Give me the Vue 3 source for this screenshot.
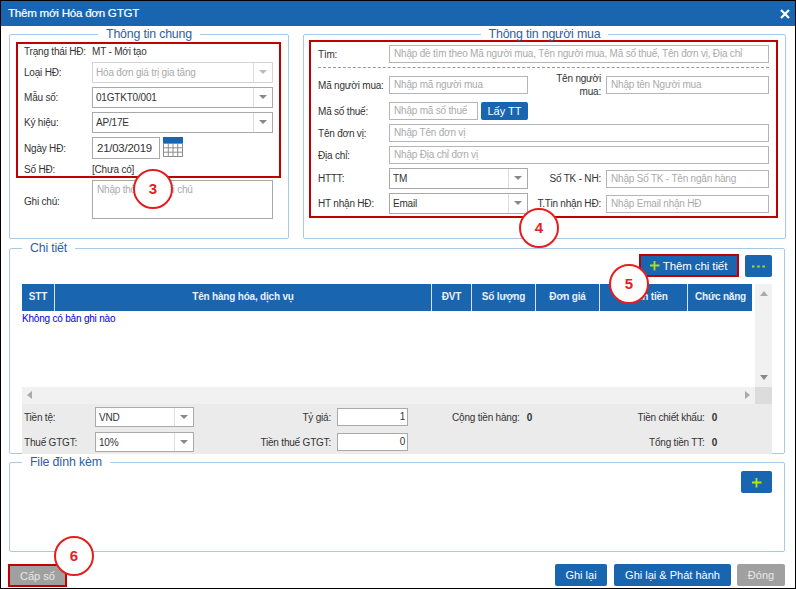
<script setup>
const columns = [
  { name: 'STT', width: 33 },
  { name: 'Tên hàng hóa, dịch vụ', width: 377 },
  { name: 'ĐVT', width: 40 },
  { name: 'Số lượng', width: 64 },
  { name: 'Đơn giá', width: 64 },
  { name: 'Thành tiền', width: 88 },
  { name: 'Chức năng', width: 65 }
]
</script>

<template>
  <div class="win">
    <header class="title">
      <span>Thêm mới Hóa đơn GTGT</span>
      <svg class="close" width="10" height="10" viewBox="0 0 10 10"><path d="M1 1l8 8M9 1l-8 8" stroke="#fff" stroke-width="2.2" fill="none" /></svg>
    </header>

    <div class="top">
      <fieldset class="fs fs-left">
        <legend class="center">Thông tin chung</legend>
        <div class="red red-left">
          <div class="row r14"><label>Trạng thái HĐ:</label><span class="val">MT - Mới tạo</span></div>
          <div class="row">
            <label>Loại HĐ:</label>
            <div class="sel disabled full"><span>Hóa đơn giá trị gia tăng</span><i></i></div>
          </div>
          <div class="row"><label>Mẫu số:</label><div class="sel full"><span>01GTKT0/001</span><i></i></div></div>
          <div class="row"><label>Ký hiệu:</label><div class="sel full"><span>AP/17E</span><i></i></div></div>
          <div class="row r22">
            <label>Ngày HĐ:</label>
            <div class="date">21/03/2019</div>
            <svg class="cal" width="20" height="20" viewBox="0 0 20 20">
              <rect x="0" y="0" width="20" height="6" fill="#1a65b0" />
              <path d="M.5 6v14M5.3 6v14M10 6v14M14.7 6v14M19.5 6v14M0 6.500h20M0 10.800h20M0 15.200h20M0 19.500h20" stroke="#8c8c8c" fill="none" />
            </svg>
          </div>
          <div class="row r13"><label>Số HĐ:</label><span class="val">[Chưa có]</span></div>
        </div>
        <div class="note">
          <label>Ghi chú:</label>
          <div class="textarea">Nhập thông tin ghi chú</div>
        </div>
      </fieldset>

      <fieldset class="fs fs-right">
        <legend class="center">Thông tin người mua</legend>
        <div class="red red-right">
          <div class="line"><label>Tìm:</label><div class="inp grow ph">Nhập đề tìm theo Mã người mua, Tên người mua, Mã số thuế, Tên đơn vị, Địa chỉ</div></div>
          <div class="dash"></div>
          <div class="line">
            <label>Mã người mua:</label><div class="inp w139 ph">Nhập mã người mua</div>
            <label class="l2">Tên người<br />mua:</label><div class="inp grow ph">Nhập tên Người mua</div>
          </div>
          <div class="line gap8">
            <label>Mã số thuế:</label><div class="inp w89 ph">Nhập mã số thuế</div><button class="btn lay">Lấy TT</button>
          </div>
          <div class="line gap4"><label>Tên đơn vị:</label><div class="inp grow ph">Nhập Tên đơn vị</div></div>
          <div class="line gap4"><label>Địa chỉ:</label><div class="inp grow ph">Nhập Địa chỉ đơn vị</div></div>
          <div class="line gap4 tall">
            <label>HTTT:</label><div class="sel w139"><span>TM</span><i></i></div>
            <label class="l2">Số TK - NH:</label><div class="inp grow ph">Nhập Số TK - Tên ngân hàng</div>
          </div>
          <div class="line gap4 tall">
            <label>HT nhận HĐ:</label><div class="sel w139"><span>Email</span><i></i></div>
            <label class="l2">T.Tin nhận HĐ:</label><div class="inp grow ph">Nhập Email nhận HĐ</div>
          </div>
        </div>
      </fieldset>
    </div>

    <fieldset class="fs fs-detail">
      <legend>Chi tiết</legend>
      <div class="toolbar">
        <button class="btn add">
          <svg width="11" height="11" viewBox="0 0 11 11"><path d="M5.500 1v9.500M1 5.500h9.500" stroke="#a8e01e" stroke-width="1.800" fill="none" /></svg>
          Thêm chi tiết
        </button>
        <button class="btn more">
          <svg width="13" height="3" viewBox="0 0 13 3"><path d="M0 1.500h2.500M5.200 1.500h2.500M10.400 1.500h2.500" stroke="#a8e01e" stroke-width="2" fill="none" /></svg>
        </button>
      </div>
      <div class="grid">
        <div class="grid-main">
          <div class="thead">
            <div v-for="c in columns" :key="c.name" class="th" :style="{ width: c.width + 'px' }">{{ c.name }}</div>
          </div>
          <div class="empty">Không có bản ghi nào</div>
        </div>
        <div class="vbar"><b class="up"></b><b class="down"></b></div>
        <div class="hbar"><b class="left"></b><b class="right"></b></div>
        <div class="corner"></div>
      </div>
      <div class="summary">
        <div class="sum-row">
          <label class="s1">Tiền tệ:</label>
          <div class="sel w99"><span>VND</span><i></i></div>
          <label class="s2">Tỷ giá:</label>
          <div class="num">1</div>
          <div class="s3">Cộng tiền hàng:<em>0</em></div>
          <div class="s4">Tiền chiết khấu:<em>0</em></div>
        </div>
        <div class="sum-row">
          <label class="s1">Thuế GTGT:</label>
          <div class="sel w99"><span>10%</span><i></i></div>
          <label class="s2">Tiền thuế GTGT:</label>
          <div class="num">0</div>
          <div class="s3"></div>
          <div class="s4">Tổng tiền TT:<em>0</em></div>
        </div>
      </div>
    </fieldset>

    <fieldset class="fs fs-file">
      <legend>File đính kèm</legend>
      <div class="file-tools">
        <button class="btn plus">
          <svg width="11" height="11" viewBox="0 0 11 11"><path d="M5.500 1v9.500M1 5.500h9.500" stroke="#b4ec00" stroke-width="1.800" fill="none" /></svg>
        </button>
      </div>
    </fieldset>

    <footer class="foot">
      <button class="btn grey capso">Cấp số</button>
      <button class="btn ghi">Ghi lại</button>
      <button class="btn phat">Ghi lại &amp; Phát hành</button>
      <button class="btn grey dong">Đóng</button>
    </footer>

    <span class="mark m3">3</span>
    <span class="mark m4">4</span>
    <span class="mark m5">5</span>
    <span class="mark m6">6</span>
  </div>
</template>

<style>
html, body { margin: 0; background: #000; }
</style>

<style scoped>
.win {
  position: relative;
  box-sizing: border-box;
  width: 796px;
  height: 589px;
  padding-top: 1px;
  border-left: 1px solid #000;
  border-right: 1px solid #000;
  border-bottom: 1px solid #000;
  background: #fff;
  box-shadow: inset 0 1px 0 #000;
  font-family: "Liberation Sans", Arial, sans-serif;
  font-size: 10px;
  letter-spacing: -0.2px;
  color: #333;
  overflow: hidden;
}
.title {
  height: 25px;
  background: #1a65b0;
  color: #fff;
  font-size: 11.600px;
  letter-spacing: -0.25px;
  display: flex;
  align-items: center;
  justify-content: space-between;
  padding: 0 5px 3px 7px;
  box-sizing: border-box;
  -webkit-text-stroke: .2px #fff;
}
.close { margin-top: 3px; }
.top {
  display: flex;
  gap: 14px;
  margin: 2px 0 0 8px;
}
.fs {
  box-sizing: border-box;
  min-inline-size: 0;
  margin: 0;
  padding: 0;
  border: 1px solid #a9c8e6;
  border-radius: 2px;
}
legend {
  height: 12px;
  line-height: 12px;
  padding: 0 8px;
  margin-left: 0;
  font-size: 12.400px;
  letter-spacing: -0.2px;
  color: #2f5f9f;
  white-space: nowrap;
}
legend.center { margin-left: auto; margin-right: auto; }
.fs-left { width: 280px; height: 211px; }
.fs-right { width: 483px; height: 211px; }
.fs-detail { width: 776px; height: 212px; margin: 3px 0 0 8px; padding: 0 12px; }
.fs-file { width: 776px; height: 96px; margin: 2px 0 0 8px; padding: 3px 12px 0; }

.red { box-sizing: border-box; border: 2px solid #c00000; }
.red-left {
  width: 265px;
  height: 136px;
  margin: 2px 0 0 6px;
  padding: 0 6px;
  display: flex;
  flex-direction: column;
  gap: 4px;
}
.row { display: flex; align-items: center; height: 21px; }
.row label { width: 68px; flex: none; }
.r14 { height: 14px; }
.r13 { height: 13px; }
.r22 { height: 22px; }
.val { color: #333; }
.sel {
  box-sizing: border-box;
  height: 21px;
  display: flex;
  align-items: center;
  border: 1px solid #a9a9a9;
  background: #fff;
  position: relative;
}
.sel span { flex: 1; padding-left: 3px; }
.sel i {
  flex: none;
  width: 19px;
  height: 100%;
  box-sizing: border-box;
  border-left: 1px solid #ddd;
  position: relative;
}
.sel i::after {
  content: "";
  position: absolute;
  left: 5px;
  top: 7px;
  border-left: 4px solid transparent;
  border-right: 4px solid transparent;
  border-top: 4px solid #888;
}
.full { width: 181px; }
.disabled { border-color: #d4d4d4; color: #aaa; }
.disabled i::after { border-top-color: #bbb; }
.date {
  box-sizing: border-box;
  width: 68px;
  height: 22px;
  line-height: 20px;
  border: 1px solid #a9a9a9;
  padding-left: 4px;
  font-size: 11.400px;
  color: #333;
}
.cal { margin: -2px 0 0 3px; }
.note { display: flex; align-items: center; margin: 2px 0 0 14px; }
.note label { width: 68px; flex: none; padding-top: 4px; }
.textarea {
  box-sizing: border-box;
  width: 181px;
  height: 39px;
  border: 1px solid #a9a9a9;
  padding: 3px 4px;
  color: #aaa;
}

.red-right {
  width: 469px;
  height: 178px;
  margin: 0 0 0 5px;
  padding: 3px 7px 0;
}
.line { display: flex; align-items: center; height: 18px; }
.line > label { width: 71px; flex: none; }
.line > label.l2 {
  width: 73px;
  margin-right: 5px;
  text-align: right;
  line-height: 13px;
}
.gap8 { margin-top: 8px; }
.gap4 { margin-top: 4px; }
.tall { height: 21px; }
.dash { margin: 3.500px 0 8.500px; border-top: 1px dashed #999; }
.inp {
  box-sizing: border-box;
  height: 18px;
  line-height: 16px;
  border: 1px solid #b5b5b5;
  padding-left: 4px;
  white-space: nowrap;
  overflow: hidden;
}
.ph { color: #aaa; }
.grow { flex: 1; min-width: 0; }
.w139 { width: 139px; flex: none; }
.w89 { width: 89px; flex: none; }
.w99 { width: 99px; flex: none; }
.btn {
  border: 0;
  margin: 0;
  padding: 0;
  background: #1a65b0;
  color: #fff;
  border-radius: 2px;
  font-family: inherit;
  font-size: 11px;
  display: inline-flex;
  align-items: center;
  justify-content: center;
  box-sizing: border-box;
}
.lay { width: 47px; height: 18px; margin-left: 3px; }

.toolbar { display: flex; justify-content: flex-end; align-items: flex-start; height: 23px; gap: 6px; }
.add { width: 100px; height: 23px; border: 2px solid #c00000; border-radius: 0; gap: 3px; padding-right: 2px; font-size: 11.500px; letter-spacing: -0.1px; }
.more { width: 27px; height: 22px; margin-top: 1px; }
.grid {
  display: grid;
  grid-template-columns: 733px 17px;
  grid-template-rows: 103px 17px;
  margin-top: 7px;
}
.grid-main { overflow: hidden; }
.thead { display: flex; height: 27px; background: #1a65b0; width: 730px; overflow: hidden; }
.th {
  box-sizing: border-box;
  flex: none;
  border-right: 1px solid #d8e4f0;
  color: #e8f0f8;
  font-weight: bold;
  font-size: 10px;
  line-height: 26px;
  text-align: center;
  white-space: nowrap;
}
.th:last-child { border-right: 0; }
.empty { color: #0000e6; line-height: 14px; padding-top: 1px; }
.vbar { background: #f1f1f1; position: relative; }
.hbar { background: #f1f1f1; position: relative; }
.corner { background: #dcdcdc; }
.vbar b, .hbar b { position: absolute; width: 0; height: 0; }
.up { left: 5px; top: 7px; border: 4px solid transparent; border-top: 0; border-bottom: 5px solid #aaa; }
.down { left: 5px; bottom: 7px; border: 4px solid transparent; border-bottom: 0; border-top: 5px solid #888; }
.left { left: 5px; top: 4px; border: 4px solid transparent; border-left: 0; border-right: 5px solid #aaa; }
.right { right: 5px; top: 4px; border: 4px solid transparent; border-right: 0; border-left: 5px solid #aaa; }

.summary {
  height: 50px;
  background: #ebebeb;
  padding: 3px 0 0 2px;
  box-sizing: border-box;
}
.sum-row { display: flex; align-items: center; height: 20px; }
.sum-row + .sum-row { margin-top: 5px; }
.sum-row .sel { height: 20px; }
.s1 { width: 71px; flex: none; }
.s2 { width: 137px; flex: none; text-align: right; }
.num {
  box-sizing: border-box;
  width: 71px;
  height: 18px;
  line-height: 16px;
  margin-left: 6px;
  background: #fff;
  border: 1px solid #a9a9a9;
  text-align: right;
  padding-right: 2px;
  flex: none;
}
.s3 { width: 150px; margin-left: 44px; flex: none; white-space: nowrap; }
.s4 { width: 115px; flex: none; text-align: right; white-space: nowrap; }
em { font-style: normal; margin-left: 7px; font-weight: bold; }

.file-tools { display: flex; justify-content: flex-end; }
.plus { width: 31px; height: 22px; }

.foot { display: flex; height: 22px; margin-top: 12px; padding-left: 7px; font-size: 11px; }
.capso { width: 59px; height: 23px; border: 2px solid #c00000; border-radius: 0; }
.grey { background: #a0a0a0; color: #e8e8e8; }
.ghi { width: 52px; height: 22px; margin-left: auto; }
.phat { width: 117px; height: 22px; margin-left: 7px; }
.dong { width: 48px; height: 22px; margin-left: 6px; margin-right: 10px; }

.mark {
  position: absolute;
  box-sizing: border-box;
  width: 40px;
  height: 40px;
  border: 2px solid #e41e1e;
  border-radius: 50%;
  background: #fff;
  color: #e41e1e;
  font-size: 15px;
  font-weight: bold;
  letter-spacing: 0;
  line-height: 36px;
  text-align: center;
}
.m3 { left: 132px; top: 169px; }
.m4 { left: 518px; top: 208px; }
.m5 { left: 608px; top: 264px; }
.m6 { left: 53px; top: 536px; }
</style>
